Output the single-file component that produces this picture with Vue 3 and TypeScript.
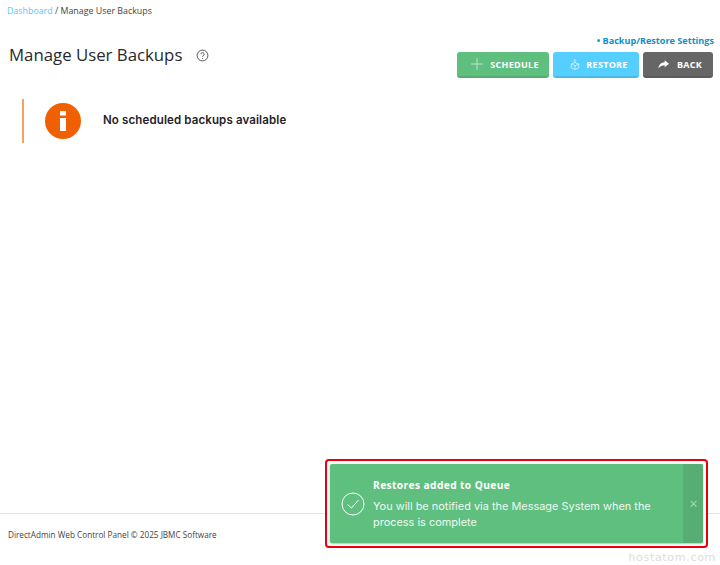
<script setup lang="ts">
const buttons = [
  { label: 'SCHEDULE', cls: 'green', icon: 'plus' },
  { label: 'RESTORE', cls: 'blue', icon: 'box' },
  { label: 'BACK', cls: 'gray', icon: 'share' },
]
</script>

<template>
  <div class="page">
    <main class="main">
      <div class="crumbs"><a class="crumb-link">Dashboard</a> / Manage User Backups</div>
      <div class="head">
        <div class="title-row">
          <h1>Manage User Backups</h1>
          <svg class="help" width="13" height="13" viewBox="0 0 13 13" fill="none" stroke="#555" stroke-width="1">
            <circle cx="6.5" cy="6.5" r="5.4" />
            <path d="M4.9 5.2a1.6 1.6 0 1 1 2.4 1.4c-.5.3-.8.6-.8 1.1" />
            <path d="M6.5 9.1v.7" />
          </svg>
        </div>
        <div class="actions">
          <a class="settings">• Backup/Restore Settings</a>
          <div class="btns">
            <button v-for="b in buttons" :key="b.label" class="btn" :class="b.cls">
              <svg v-if="b.icon === 'plus'" width="12" height="12" viewBox="0 0 12 12" stroke="#fff" stroke-width="1" opacity=".6">
                <path d="M6 0v12M0 6h12" />
              </svg>
              <svg v-else-if="b.icon === 'box'" width="10" height="11" viewBox="0 0 12 13" fill="none" stroke="#fff" stroke-width="1" opacity=".75">
                <path d="M1.5 6 6 4l4.500 2v4.500L6 12.500l-4.500-2z" />
                <path d="M1.500 6 6 8l4.500-2M6 8v4.500M6 4V.8M4.600 2 6 .6 7.400 2" />
              </svg>
              <svg v-else width="11" height="9" viewBox="0 0 14 11" fill="#fff">
                <path d="M8.500 0 14 4.500 8.500 9V6.300C5 6.300 2.500 7.300 .5 10.500 1 6 3.800 3 8.500 2.700z" />
              </svg>
              <span>{{ b.label }}</span>
            </button>
          </div>
        </div>
      </div>
      <div class="notice">
        <div class="notice-icon">
          <svg width="8" height="20" viewBox="0 0 8 20" fill="#fff">
            <rect x="1" y="0" width="6" height="4.500" />
            <rect x="1" y="7" width="6" height="13" />
          </svg>
        </div>
        <div class="notice-text">No scheduled backups available</div>
      </div>
    </main>
    <footer class="footer">DirectAdmin Web Control Panel © 2025 JBMC Software</footer>
    <div class="toast-ring">
      <div class="toast">
        <svg class="toast-check" width="24" height="24" viewBox="0 0 24 24" fill="none" stroke="#fff" stroke-width="1">
          <circle cx="12" cy="12" r="11" />
          <path d="M6.500 12.500 10.500 16 17.500 8" />
        </svg>
        <div class="toast-body">
          <div class="toast-title">Restores added to Queue</div>
          <div class="toast-msg">You will be notified via the Message System when the process is complete</div>
        </div>
        <div class="toast-close">×</div>
      </div>
    </div>
    <div class="mark">hostatom.com</div>
  </div>
</template>

<style>
html, body { margin: 0; background: #fff; }
</style>

<style scoped>
.page {
  position: relative;
  width: 720px;
  height: 565px;
  overflow: hidden;
  display: flex;
  flex-direction: column;
  font-family: "Open Sans", sans-serif;
  color: #26292e;
}
.main { flex: 1; padding: 5px 7px 0 7px; }
.crumbs { font-size: 8.850px; line-height: 13px; color: #444; }
.crumb-link { color: #5cc5f5; }
.head { display: flex; justify-content: space-between; align-items: flex-start; margin-top: 16px; }
.title-row { display: flex; align-items: center; gap: 14px; margin-top: 9px; padding-left: 2px; }
h1 { margin: 0; font-size: 16.800px; line-height: 24px; font-weight: 500; color: #26292e; }
.help { display: block; }
.actions { display: flex; flex-direction: column; align-items: flex-end; gap: 5px; }
.settings { font-size: 9.100px; line-height: 13px; font-weight: 700; color: #0f8fc8; margin-right: -1px; }
.btns { display: flex; gap: 4px; }
.btn {
  height: 26px;
  border: 0;
  border-bottom: 2px solid rgba(0,0,0,.1);
  border-radius: 3px;
  color: #fff;
  font: 700 9px "Open Sans", sans-serif;
  letter-spacing: .3px;
  display: flex;
  align-items: center;
  justify-content: center;
  gap: 8px;
  padding: 0 0 0 4px;
}
.green { width: 92px; background: #5fbf7f; gap: 7px; }
.blue { width: 86px; background: #54cfff; gap: 6px; padding-left: 6px; }
.gray { width: 70px; background: #666; }
.notice {
  margin: 21px 0 0 15px;
  height: 44px;
  border-left: 2px solid #f9a05e;
  display: flex;
  align-items: center;
  padding-left: 21px;
  gap: 22px;
}
.notice-icon {
  width: 36px;
  height: 36px;
  border-radius: 50%;
  background: #f06000;
  display: flex;
  align-items: center;
  justify-content: center;
}
.notice-icon svg { display: block; }
.notice-text { font-family: Inter, sans-serif; font-size: 11.500px; letter-spacing: .13px; font-weight: 600; color: #1f2226; margin-top: -3px; }
.footer {
  height: 52px;
  border-top: 1px solid #e6e6e6;
  padding-left: 8px;
  font-size: 8.200px;
  line-height: 41px;
  color: #444;
  box-sizing: border-box;
}
.toast-ring {
  position: absolute;
  left: 325px;
  top: 459px;
  width: 383px;
  height: 89px;
  box-sizing: border-box;
  border: 2px solid #e8000d;
  border-radius: 4px;
  padding: 3px;
  background: #fff;
}
.toast {
  height: 100%;
  background: #5fbf7f;
  border-radius: 2px;
  display: flex;
  align-items: center;
  color: #fff;
  box-shadow: 0 1px 2px rgba(0,0,0,.25);
}
.toast-check { margin-left: 11px; flex: none; }
.toast-body { flex: 1; padding-left: 8px; font-family: Inter, sans-serif; }
.toast-title { font-family: "Open Sans", sans-serif; font-size: 10.200px; line-height: 14px; font-weight: 700; letter-spacing: .4px; }
.toast-msg { width: 300px; font-size: 10.950px; line-height: 16px; margin-top: 6px; color: #eef8f1; }
.toast-close {
  width: 20px;
  flex: none;
  align-self: stretch;
  background: #57ae74;
  border-radius: 0 2px 2px 0;
  display: flex;
  align-items: center;
  justify-content: center;
  padding-left: 1px;
  box-sizing: border-box;
  font-size: 14px;
  color: #a9d9b8;
}
.mark {
  position: absolute;
  right: 4px;
  top: 551px;
  font: 11px "DejaVu Sans", sans-serif;
  letter-spacing: .7px;
  color: #dcdcdc;
}
</style>
